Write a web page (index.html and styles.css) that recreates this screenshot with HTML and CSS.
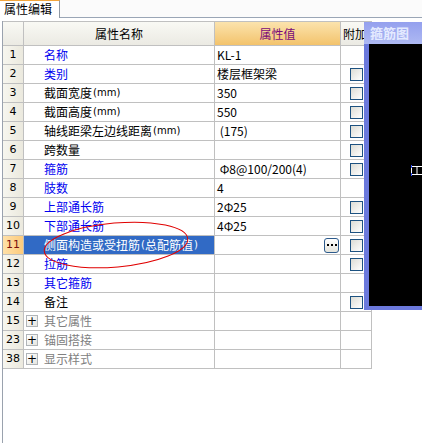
FILE: index.html
```html
<!DOCTYPE html>
<html><head><meta charset="utf-8"><link rel="stylesheet" href="styles.css"></head>
<body>
<div class="tabbar"><div class="tab">属性编辑</div><div class="tabfill"></div></div>
<div class="panel">
<div class="grid">
  <div class="c hd"></div><div class="c hd ctr">属性名称</div><div class="c hd hv ctr">属性值</div><div class="c hd">附加</div>

  <div class="c num">1</div><div class="c name blue">名称</div><div class="c val">KL-1</div><div class="c att"></div>
  <div class="c num">2</div><div class="c name blue">类别</div><div class="c val">楼层框架梁</div><div class="c att"><i class="cb"></i></div>
  <div class="c num">3</div><div class="c name">截面宽度<span class="mm">(mm)</span></div><div class="c val">350</div><div class="c att"><i class="cb"></i></div>
  <div class="c num">4</div><div class="c name">截面高度<span class="mm">(mm)</span></div><div class="c val">550</div><div class="c att"><i class="cb"></i></div>
  <div class="c num">5</div><div class="c name">轴线距梁左边线距离<span class="mm">(mm)</span></div><div class="c val">&nbsp;(175)</div><div class="c att"><i class="cb"></i></div>
  <div class="c num">6</div><div class="c name">跨数量</div><div class="c val"></div><div class="c att"><i class="cb"></i></div>
  <div class="c num">7</div><div class="c name blue">箍筋</div><div class="c val">&nbsp;Φ8@100/200(4)</div><div class="c att"><i class="cb"></i></div>
  <div class="c num">8</div><div class="c name blue">肢数</div><div class="c val">4</div><div class="c att"></div>
  <div class="c num">9</div><div class="c name blue">上部通长筋</div><div class="c val">2Φ25</div><div class="c att"><i class="cb"></i></div>
  <div class="c num">10</div><div class="c name blue">下部通长筋</div><div class="c val">4Φ25</div><div class="c att"><i class="cb"></i></div>
  <div class="c num sel">11</div><div class="c name selname">侧面构造或受扭筋<span class="mm">(</span>总配筋值<span class="mm">)</span></div><div class="c val edit"><span></span><b class="dots"><i></i><i></i><i></i></b></div><div class="c att"><i class="cb"></i></div>
  <div class="c num">12</div><div class="c name blue">拉筋</div><div class="c val"></div><div class="c att"><i class="cb"></i></div>
  <div class="c num">13</div><div class="c name blue">其它箍筋</div><div class="c val"></div><div class="c att"></div>
  <div class="c num">14</div><div class="c name">备注</div><div class="c val"></div><div class="c att"><i class="cb"></i></div>
  <div class="c num">15</div><div class="c name grp"><span class="plus">+</span>其它属性</div><div class="c val"></div><div class="c att"></div>
  <div class="c num">23</div><div class="c name grp"><span class="plus">+</span>锚固搭接</div><div class="c val"></div><div class="c att"></div>
  <div class="c num">38</div><div class="c name grp"><span class="plus">+</span>显示样式</div><div class="c val"></div><div class="c att"></div>
</div>
</div>

<div class="win">
  <div class="win-title">箍筋图</div>
  <div class="win-body">
    <svg class="glyph" width="12" height="11" viewBox="0 0 12 11">
      <path d="M1 1.5H11M1 9.5H11M6 1.5V9.5" stroke="#fff" stroke-width="1" fill="none"/>
      <path d="M0.5 0V3M0.5 8V11" stroke="#3050ff" stroke-width="1"/>
      <path d="M0.5 3V8" stroke="#fff" stroke-width="1"/>
    </svg>
  </div>
</div>

<svg class="mark" width="422" height="443" viewBox="0 0 422 443">
  <ellipse cx="116" cy="245" rx="72" ry="22" transform="rotate(-5 116 245)" fill="none" stroke="#e00000" stroke-width="1"/>
</svg>
</body></html>
```
FILE: styles.css
```css
html, body {
  margin: 0;
  padding: 0;
}
body {
  width: 422px;
  height: 443px;
  overflow: hidden;
  position: relative;
  background: #fff;
  font-family: "Noto Sans CJK SC", "DejaVu Sans", sans-serif;
  font-size: 12px;
  color: #000;
}
.tabbar {
  display: flex;
  height: 18px;
  background: #fbfbfb;
}
.tab {
  width: 60px;
  box-sizing: border-box;
  border-top: 1px solid #f2a53c;
  border-right: 1px solid #8f99a4;
  background: #fff;
  padding-left: 4px;
  line-height: 16px;
  font-size: 12px;
}
.tabfill {
  flex: 1;
  border-bottom: 1px solid #9aa6b6;
}
.panel {
  margin: 3px 0 0 2px;
  border-left: 1px solid #9aa2ae;
  height: 422px;
}
.grid {
  display: grid;
  grid-template-columns: 21px 191px 126px 31px;
  grid-template-rows: 24px;
  grid-auto-rows: 19px;
  border-top: 1px solid #c0c0c0;
  width: max-content;
}
.c {
  box-sizing: border-box;
  border-right: 1px solid #c0c0c0;
  border-bottom: 1px solid #c0c0c0;
  display: flex;
  align-items: center;
  white-space: nowrap;
  overflow: hidden;
  line-height: 16px;
}
.hd {
  background: linear-gradient(#f9f9f4, #ebeae3);
  padding-left: 2px;
}
.ctr {
  justify-content: center;
  padding-left: 0;
}
.hv {
  background: linear-gradient(#fbe3ad, #f3c36c);
  color: #7a0a7a;
}
.num {
  background: linear-gradient(90deg, #f7f6ef, #ebe9de);
  justify-content: center;
  font-family: "DejaVu Sans", sans-serif;
  font-size: 11px;
}
.num.sel {
  background: linear-gradient(90deg, #ffe0a8, #fccb7c);
  color: #7a1010;
}
.name {
  padding-left: 20px;
}
.blue {
  color: #0000f0;
}
.selname {
  background: #316ac5;
  color: #fff;
}
.grp {
  padding-left: 2px;
  color: #808080;
}
.plus {
  width: 12px;
  height: 12px;
  box-sizing: border-box;
  border: 1px solid #b0b4b8;
  background: linear-gradient(135deg, #fff, #e6e6e0);
  color: #000;
  font-family: "DejaVu Sans", sans-serif;
  font-size: 12px;
  line-height: 10px;
  text-align: center;
  margin-right: 6px;
}
.mm {
  font-family: "DejaVu Sans", sans-serif;
  font-size: 10px;
  margin-left: 1px;
}
.val {
  padding-left: 2px;
  font-family: "Noto Sans CJK SC", "DejaVu Sans", sans-serif;
}
.edit {
  justify-content: space-between;
  padding-right: 1px;
}
.dots {
  width: 15px;
  height: 15px;
  box-sizing: border-box;
  border: 1px solid #2c5a8c;
  border-radius: 3px;
  background: linear-gradient(#ffffff, #e4e4dc);
  display: flex;
  align-items: center;
  justify-content: center;
  gap: 2px;
}
.dots i {
  width: 2px;
  height: 2px;
  background: #000;
}
.att {
  justify-content: center;
}
.cb {
  width: 13px;
  height: 13px;
  box-sizing: border-box;
  border: 1px solid #1c5180;
  background: linear-gradient(135deg, #dcdcd5, #ffffff);
}
.win {
  position: absolute;
  left: 364px;
  top: 22px;
  width: 58px;
  height: 288px;
  background: #6b79dc;
  display: flex;
  flex-direction: column;
}
.win-title {
  height: 22px;
  background: linear-gradient(#94a0ee, #aeb9f3);
  color: #e4eaff;
  font-weight: bold;
  font-size: 13px;
  line-height: 22px;
  padding-left: 6px;
  white-space: nowrap;
}
.win-body {
  flex: 1;
  margin: 0 0 4px 5px;
  background: #000;
  position: relative;
}
.glyph {
  position: absolute;
  left: 42px;
  top: 121px;
}
.mark {
  position: absolute;
  left: 0;
  top: 0;
  pointer-events: none;
}
```
